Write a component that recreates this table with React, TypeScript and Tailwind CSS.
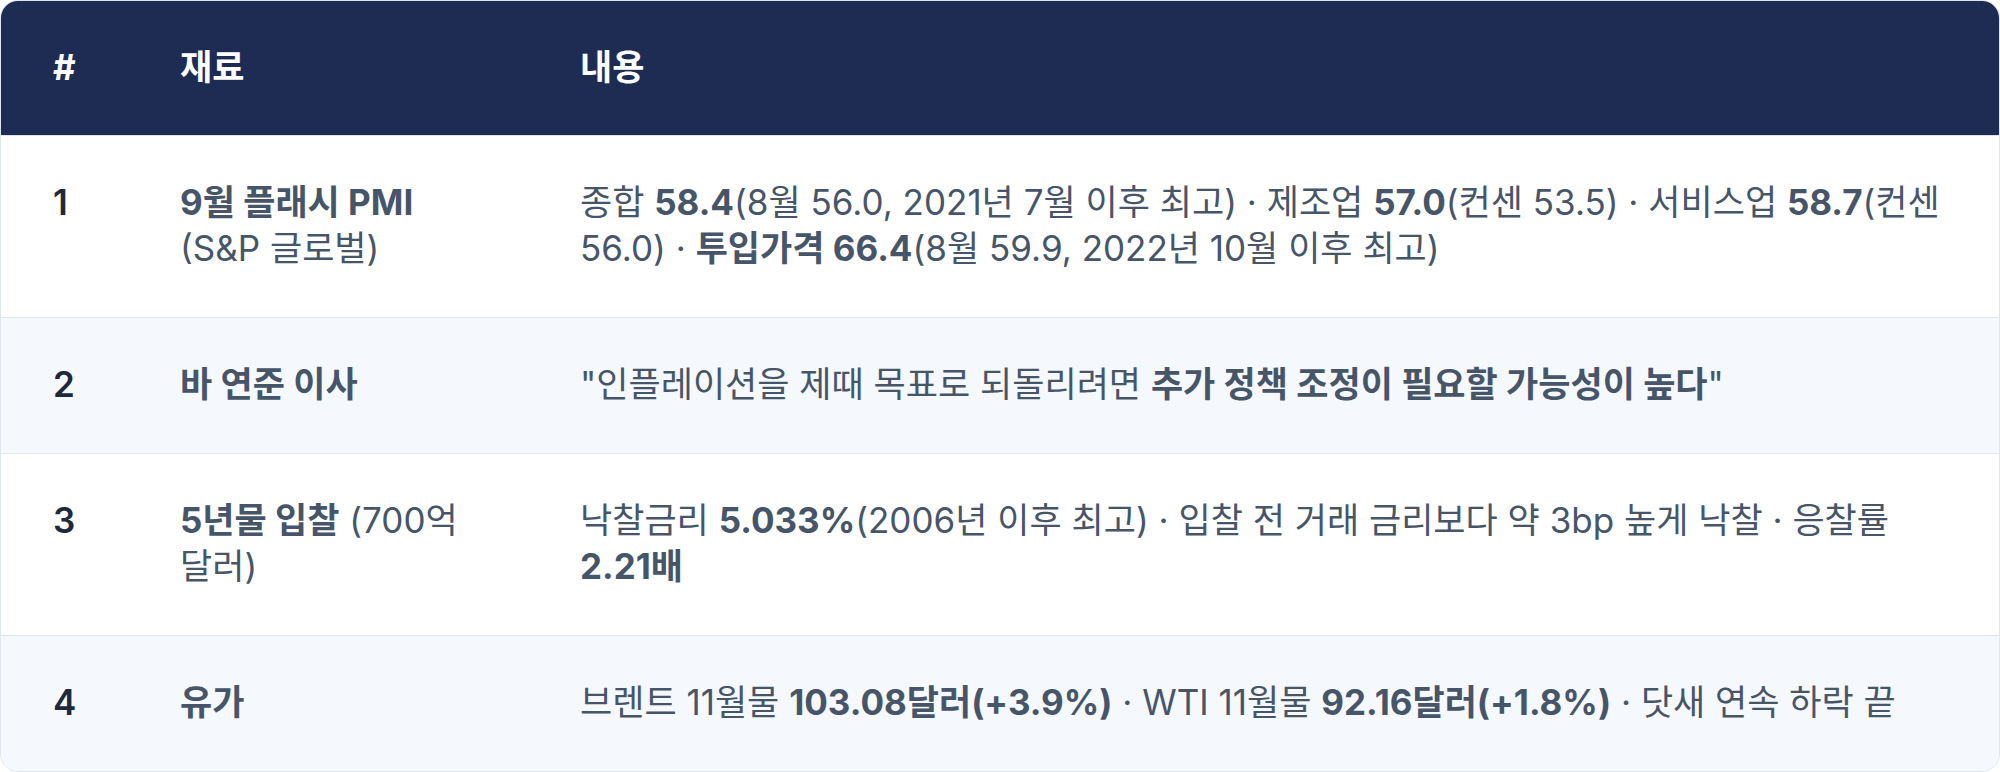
import React from 'react';

type Row = {
  no: number;
  title: React.ReactNode;
  body: React.ReactNode;
};

const rows: Row[] = [
  {
    no: 1,
    title: (
      <>
        <span className="font-bold">9월 플래시 PMI</span>
        <br />
        (S&amp;P 글로벌)
      </>
    ),
    body: (
      <>
        종합 <b className="font-bold">58.4</b>(8월 56.0, 2021년 7월 이후 최고) · 제조업{' '}
        <b className="font-bold">57.0</b>(컨센 53.5) · 서비스업 <b className="font-bold">58.7</b>(컨센 56.0) ·{' '}
        <b className="font-bold">투입가격 66.4</b>(8월 59.9, 2022년 10월 이후 최고)
      </>
    ),
  },
  {
    no: 2,
    title: <span className="font-bold">바 연준 이사</span>,
    body: (
      <>
        "인플레이션을 제때 목표로 되돌리려면 <b className="font-bold">추가 정책 조정이 필요할 가능성이 높다</b>"
      </>
    ),
  },
  {
    no: 3,
    title: (
      <>
        <span className="font-bold">5년물 입찰</span> (700억 달러)
      </>
    ),
    body: (
      <>
        낙찰금리 <b className="font-bold">5.033%</b>(2006년 이후 최고) · 입찰 전 거래 금리보다 약 3bp 높게 낙찰 · 응찰률{' '}
        <b className="font-bold">2.21배</b>
      </>
    ),
  },
  {
    no: 4,
    title: <span className="font-bold">유가</span>,
    body: (
      <>
        브렌트 11월물 <b className="font-bold">103.08달러(+3.9%)</b> · WTI 11월물{' '}
        <b className="font-bold">92.16달러(+1.8%)</b> · 닷새 연속 하락 끝
      </>
    ),
  },
];

const App: React.FC = () => {
  return (
    <div
      className="w-[2000px] h-[772px] bg-white"
      style={{ fontFamily: 'Inter, "Noto Sans CJK KR", sans-serif' }}
    >
      <div className="rounded-[18px] border border-[#dfe6f0] overflow-hidden text-[35px] leading-[46px]">
        {/* Header */}
        <div className="grid grid-cols-[127px_400px_1fr] bg-[#1e2b52] text-white font-bold">
          <div className="px-[52px] pt-[43px] pb-[45px]">#</div>
          <div className="px-[52px] pt-[43px] pb-[45px]">재료</div>
          <div className="px-[52px] pt-[43px] pb-[45px]">내용</div>
        </div>

        {/* Body */}
        {rows.map((row, i) => (
          <div
            key={row.no}
            className={`grid grid-cols-[127px_400px_1fr] border-t border-[#dfe6f0] text-[#475569] ${
              i % 2 === 1 ? 'bg-[#f5f8fc]' : 'bg-white'
            }`}
          >
            <div className="px-[52px] pt-[43px] pb-[46px] font-semibold text-[#1e293b]">{row.no}</div>
            <div className="px-[52px] pt-[43px] pb-[46px]">{row.title}</div>
            <div className="px-[52px] pt-[43px] pb-[46px]">{row.body}</div>
          </div>
        ))}
      </div>
    </div>
  );
};

export default App;
